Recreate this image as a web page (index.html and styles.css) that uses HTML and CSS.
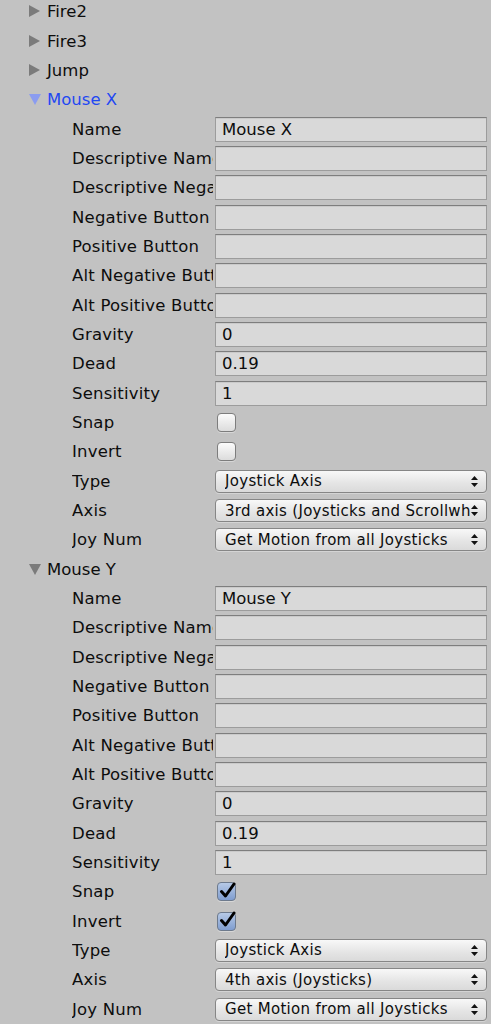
FILE: index.html
```html
<!DOCTYPE html>
<html>
<head>
<meta charset="utf-8">
<link rel="stylesheet" href="styles.css">
</head>
<body>
<div class="inspector">
  <div class="foldout"><span class="tri tri-closed"></span><span class="ftext">Fire2</span></div>
  <div class="foldout"><span class="tri tri-closed"></span><span class="ftext">Fire3</span></div>
  <div class="foldout"><span class="tri tri-closed"></span><span class="ftext">Jump</span></div>
  <div class="foldout active"><span class="tri tri-open"></span><span class="ftext">Mouse X</span></div>
  <div class="props">
    <div class="row"><div class="label">Name</div><div class="field">Mouse X</div></div>
    <div class="row"><div class="label">Descriptive Name</div><div class="field"></div></div>
    <div class="row"><div class="label">Descriptive Negative Name</div><div class="field"></div></div>
    <div class="row"><div class="label">Negative Button</div><div class="field"></div></div>
    <div class="row"><div class="label">Positive Button</div><div class="field"></div></div>
    <div class="row"><div class="label">Alt Negative Button</div><div class="field"></div></div>
    <div class="row"><div class="label">Alt Positive Button</div><div class="field"></div></div>
    <div class="row"><div class="label">Gravity</div><div class="field">0</div></div>
    <div class="row"><div class="label">Dead</div><div class="field">0.19</div></div>
    <div class="row"><div class="label">Sensitivity</div><div class="field">1</div></div>
    <div class="row"><div class="label">Snap</div><div class="check"></div></div>
    <div class="row"><div class="label">Invert</div><div class="check"></div></div>
    <div class="row"><div class="label">Type</div><div class="popup"><span class="ptext">Joystick Axis</span><svg class="arrows" width="7" height="11" viewBox="0 0 7 11"><path d="M3.5 0 L7 4 L0 4 Z M0 7 L7 7 L3.5 11 Z" fill="#111"/></svg></div></div>
    <div class="row"><div class="label">Axis</div><div class="popup"><span class="ptext">3rd axis (Joysticks and Scrollwheel)</span><svg class="arrows" width="7" height="11" viewBox="0 0 7 11"><path d="M3.5 0 L7 4 L0 4 Z M0 7 L7 7 L3.5 11 Z" fill="#111"/></svg></div></div>
    <div class="row"><div class="label">Joy Num</div><div class="popup"><span class="ptext">Get Motion from all Joysticks</span><svg class="arrows" width="7" height="11" viewBox="0 0 7 11"><path d="M3.5 0 L7 4 L0 4 Z M0 7 L7 7 L3.5 11 Z" fill="#111"/></svg></div></div>
  </div>
  <div class="foldout"><span class="tri tri-open"></span><span class="ftext">Mouse Y</span></div>
  <div class="props">
    <div class="row"><div class="label">Name</div><div class="field">Mouse Y</div></div>
    <div class="row"><div class="label">Descriptive Name</div><div class="field"></div></div>
    <div class="row"><div class="label">Descriptive Negative Name</div><div class="field"></div></div>
    <div class="row"><div class="label">Negative Button</div><div class="field"></div></div>
    <div class="row"><div class="label">Positive Button</div><div class="field"></div></div>
    <div class="row"><div class="label">Alt Negative Button</div><div class="field"></div></div>
    <div class="row"><div class="label">Alt Positive Button</div><div class="field"></div></div>
    <div class="row"><div class="label">Gravity</div><div class="field">0</div></div>
    <div class="row"><div class="label">Dead</div><div class="field">0.19</div></div>
    <div class="row"><div class="label">Sensitivity</div><div class="field">1</div></div>
    <div class="row"><div class="label">Snap</div><div class="check checked"><svg width="17" height="17" viewBox="0 0 17 17"><path d="M2.5 9.5 L6.5 14 L15 2" fill="none" stroke="#000" stroke-width="3" stroke-linecap="round" stroke-linejoin="round"/></svg></div></div>
    <div class="row"><div class="label">Invert</div><div class="check checked"><svg width="17" height="17" viewBox="0 0 17 17"><path d="M2.5 9.5 L6.5 14 L15 2" fill="none" stroke="#000" stroke-width="3" stroke-linecap="round" stroke-linejoin="round"/></svg></div></div>
    <div class="row"><div class="label">Type</div><div class="popup"><span class="ptext">Joystick Axis</span><svg class="arrows" width="7" height="11" viewBox="0 0 7 11"><path d="M3.5 0 L7 4 L0 4 Z M0 7 L7 7 L3.5 11 Z" fill="#111"/></svg></div></div>
    <div class="row"><div class="label">Axis</div><div class="popup"><span class="ptext">4th axis (Joysticks)</span><svg class="arrows" width="7" height="11" viewBox="0 0 7 11"><path d="M3.5 0 L7 4 L0 4 Z M0 7 L7 7 L3.5 11 Z" fill="#111"/></svg></div></div>
    <div class="row"><div class="label">Joy Num</div><div class="popup"><span class="ptext">Get Motion from all Joysticks</span><svg class="arrows" width="7" height="11" viewBox="0 0 7 11"><path d="M3.5 0 L7 4 L0 4 Z M0 7 L7 7 L3.5 11 Z" fill="#111"/></svg></div></div>
  </div>
</div>
</body>
</html>
```
FILE: styles.css
```css
html, body {
  margin: 0;
  padding: 0;
  background: #c2c2c2;
  overflow: hidden;
}
body {
  font-family: "DejaVu Sans", "Open Sans", sans-serif;
  font-size: 16.5px;
  color: #0d0d0d;
}
.inspector {
  margin-top: -2.7px;
  width: 491px;
}
.foldout {
  height: 29.33px;
  display: flex;
  align-items: center;
  padding-left: 29px;
}
.foldout .ftext {
  margin-left: 6px;
}
.tri {
  display: block;
  width: 12px;
  height: 13px;
  position: relative;
}
.tri-closed::before {
  content: "";
  position: absolute;
  left: 0;
  top: 0;
  border-left: 11px solid #7b7b7b;
  border-top: 6.5px solid transparent;
  border-bottom: 6.5px solid transparent;
}
.tri-open::before {
  content: "";
  position: absolute;
  left: 0;
  top: 1px;
  border-top: 11px solid #7b7b7b;
  border-left: 6.5px solid transparent;
  border-right: 6.5px solid transparent;
}
.active {
  color: #1f48f2;
}
.active .tri-open::before {
  border-top-color: #8b9cf0;
}
.row {
  height: 29.33px;
  display: flex;
  align-items: center;
  padding-left: 72px;
}
.label {
  width: 141px;
  margin-right: 2px;
  white-space: nowrap;
  overflow: hidden;
  letter-spacing: 0.2px;
}
.field {
  width: 272px;
  height: 25px;
  box-sizing: border-box;
  background: #d9d9d9;
  border: 1px solid #9c9c9c;
  border-top-color: #7e7e7e;
  box-shadow: inset 0 1px 0 #cacaca;
  padding-left: 6px;
  display: flex;
  align-items: center;
  white-space: nowrap;
  overflow: hidden;
}
.check {
  width: 19px;
  height: 19px;
  box-sizing: border-box;
  margin-left: 2px;
  border: 1px solid #7d7d7d;
  border-radius: 4px;
  background: linear-gradient(#fbfbfb, #dcdcdc);
  box-shadow: 0 1px 0 rgba(255,255,255,0.35);
  display: flex;
  align-items: center;
  justify-content: center;
  overflow: visible;
}
.check.checked {
  background: linear-gradient(#b6c9e6, #7f9dd0);
  border-color: #6d7a8d;
}
.check.checked svg {
  flex: none;
  margin-top: -3px;
  margin-left: 1px;
}
.popup {
  width: 272px;
  height: 23px;
  box-sizing: border-box;
  border: 1px solid #868686;
  border-radius: 4px;
  background: linear-gradient(#f8f8f8, #e4e4e4 60%, #dadada);
  box-shadow: 0 1px 0 rgba(255,255,255,0.3);
  display: flex;
  align-items: center;
  padding-left: 9px;
  padding-right: 8px;
  font-size: 15px;
}
.ptext {
  flex: 1;
  white-space: nowrap;
  overflow: hidden;
  letter-spacing: 0.3px;
}
.arrows {
  flex: none;
  margin-left: 1px;
}
```
